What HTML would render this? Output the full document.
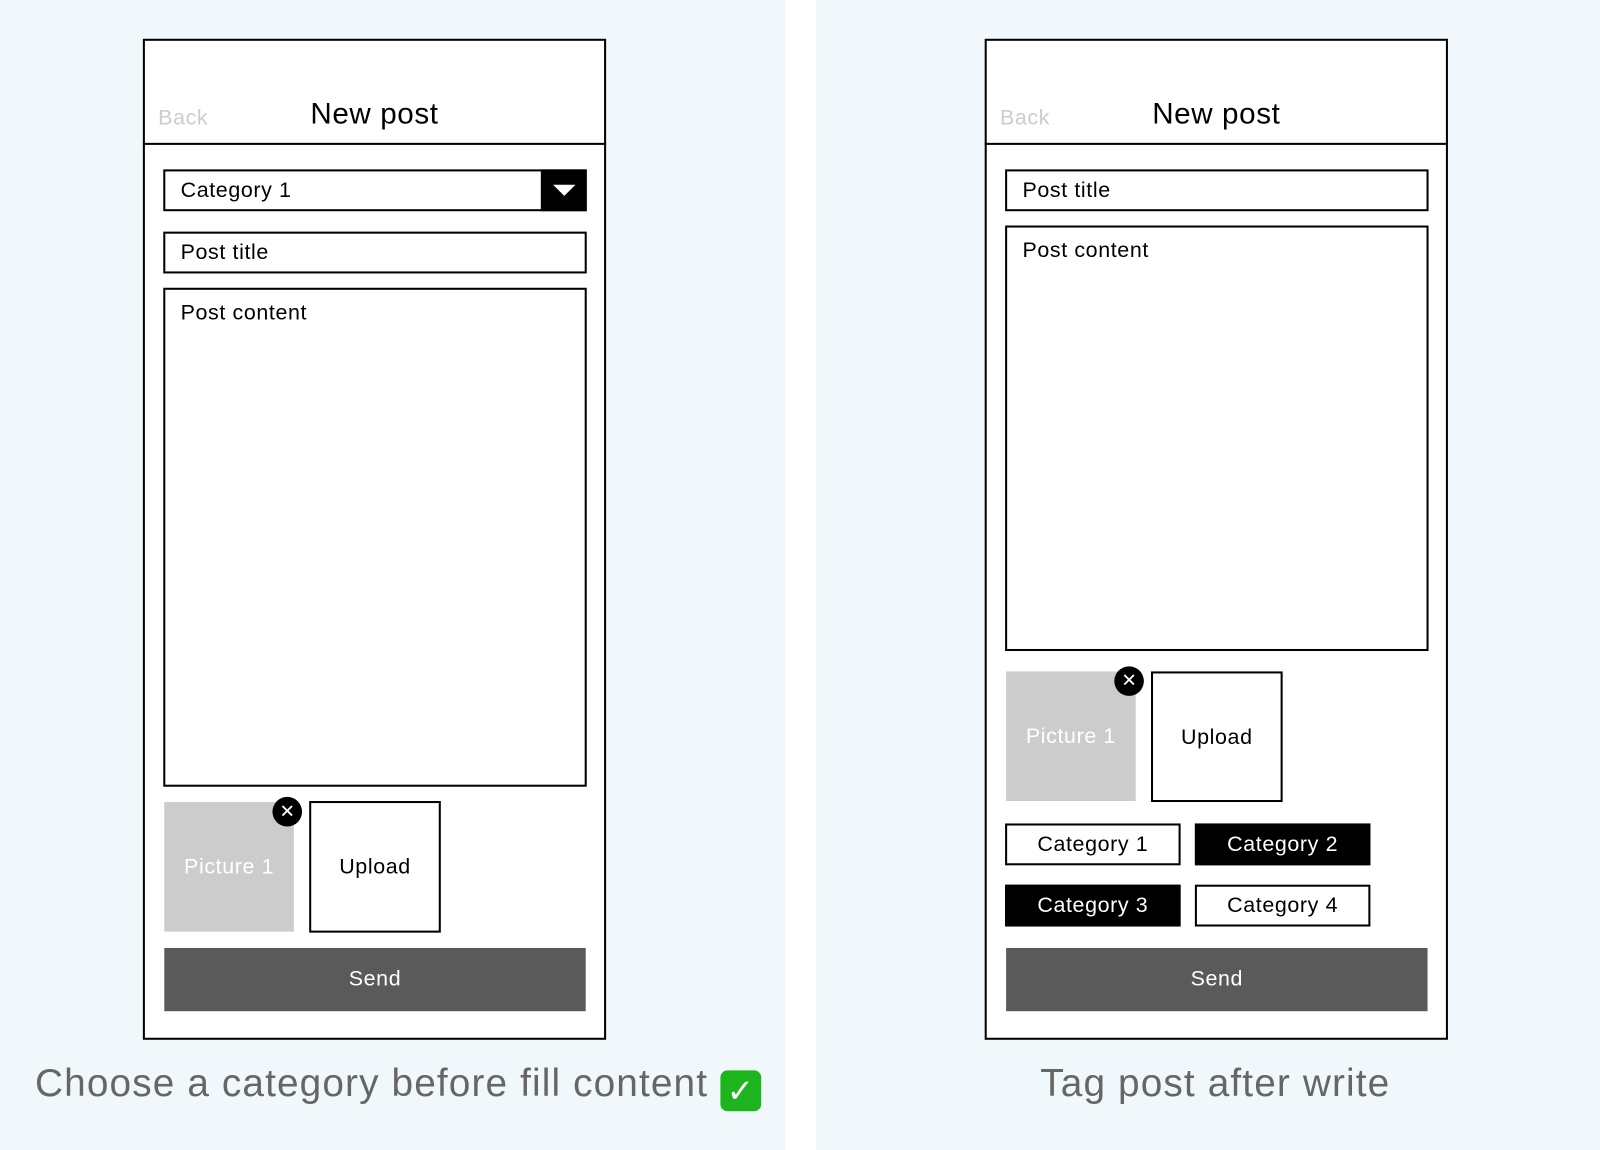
<!DOCTYPE html>
<html><head><meta charset="utf-8"><style>
html,body{margin:0;padding:0;width:1600px;height:1150px;overflow:hidden;background:#fff;}
#w{position:absolute;left:0;top:0;width:1568px;height:1127px;transform:scale(1.0204);transform-origin:0 0;font-family:"Liberation Sans",sans-serif;letter-spacing:0.6px;}
.a{position:absolute;box-sizing:border-box;}
.bg{background:#f1f8fc;top:0;height:1127px;}
.ph{background:#fff;border:2px solid #000;}
.box{border:2px solid #000;background:#fff;font-size:21px;color:#000;padding-left:15px;line-height:37px;}
.ctr{display:flex;align-items:center;justify-content:center;}
.x{width:29px;height:29px;border-radius:50%;background:#000;color:#fff;font-size:18px;line-height:29px;text-align:center;letter-spacing:0;}
.send{background:#5a5a5a;color:#fff;font-size:21px;}
.cap{font-size:38px;color:#666;text-align:center;top:1041px;letter-spacing:1.1px;}
</style></head><body><div id="w">
<div class="a bg" style="left:0;width:770px"></div>
<div class="a bg" style="left:800px;width:768px"></div>

<!-- left phone -->
<div class="a ph" style="left:140px;top:38px;width:454px;height:981px"></div>
<div class="a" style="left:140px;top:140px;width:454px;height:2px;background:#000"></div>
<div class="a" style="left:155px;top:104px;font-size:21px;color:#ccc">Back</div>
<div class="a" style="left:140px;top:96px;width:454px;text-align:center;font-size:29px">New post</div>
<div class="a box" style="left:160px;top:166px;width:415px;height:41px">Category 1</div>
<div class="a ctr" style="left:530px;top:166px;width:45px;height:41px;background:#000"><div style="width:0;height:0;border-left:11px solid transparent;border-right:11px solid transparent;border-top:11px solid #fff"></div></div>
<div class="a box" style="left:160px;top:227px;width:415px;height:41px">Post title</div>
<div class="a box" style="left:160px;top:282px;width:415px;height:489px;padding-top:4px">Post content</div>
<div class="a ctr" style="left:161px;top:786px;width:127px;height:127px;background:#ccc;color:#fff;font-size:21px">Picture 1</div>
<div class="a x" style="left:267px;top:781px">✕</div>
<div class="a box ctr" style="left:303px;top:785px;width:129px;height:129px;padding:0">Upload</div>
<div class="a send ctr" style="left:161px;top:929px;width:413px;height:62px">Send</div>
<div class="a cap" style="left:0;width:780px">Choose a category before fill content <span style="display:inline-block;width:40px;height:40px;background:#1db51d;border-radius:7px;color:#fff;font-size:32px;line-height:40px;vertical-align:-6px;letter-spacing:0">✓</span></div>

<!-- right phone -->
<div class="a ph" style="left:965px;top:38px;width:454px;height:981px"></div>
<div class="a" style="left:965px;top:140px;width:454px;height:2px;background:#000"></div>
<div class="a" style="left:980px;top:104px;font-size:21px;color:#ccc">Back</div>
<div class="a" style="left:965px;top:96px;width:454px;text-align:center;font-size:29px">New post</div>
<div class="a box" style="left:985px;top:166px;width:415px;height:41px">Post title</div>
<div class="a box" style="left:985px;top:221px;width:415px;height:417px;padding-top:4px">Post content</div>
<div class="a ctr" style="left:986px;top:658px;width:127px;height:127px;background:#ccc;color:#fff;font-size:21px">Picture 1</div>
<div class="a x" style="left:1092px;top:653px">✕</div>
<div class="a box ctr" style="left:1128px;top:658px;width:129px;height:128px;padding:0">Upload</div>
<div class="a box ctr" style="left:985px;top:807px;width:172px;height:41px;padding:0">Category 1</div>
<div class="a box ctr" style="left:1171px;top:807px;width:172px;height:41px;padding:0;background:#000;color:#fff">Category 2</div>
<div class="a box ctr" style="left:985px;top:867px;width:172px;height:41px;padding:0;background:#000;color:#fff">Category 3</div>
<div class="a box ctr" style="left:1171px;top:867px;width:172px;height:41px;padding:0">Category 4</div>
<div class="a send ctr" style="left:986px;top:929px;width:413px;height:62px">Send</div>
<div class="a cap" style="left:800px;width:782px">Tag post after write</div>
</div></body></html>
